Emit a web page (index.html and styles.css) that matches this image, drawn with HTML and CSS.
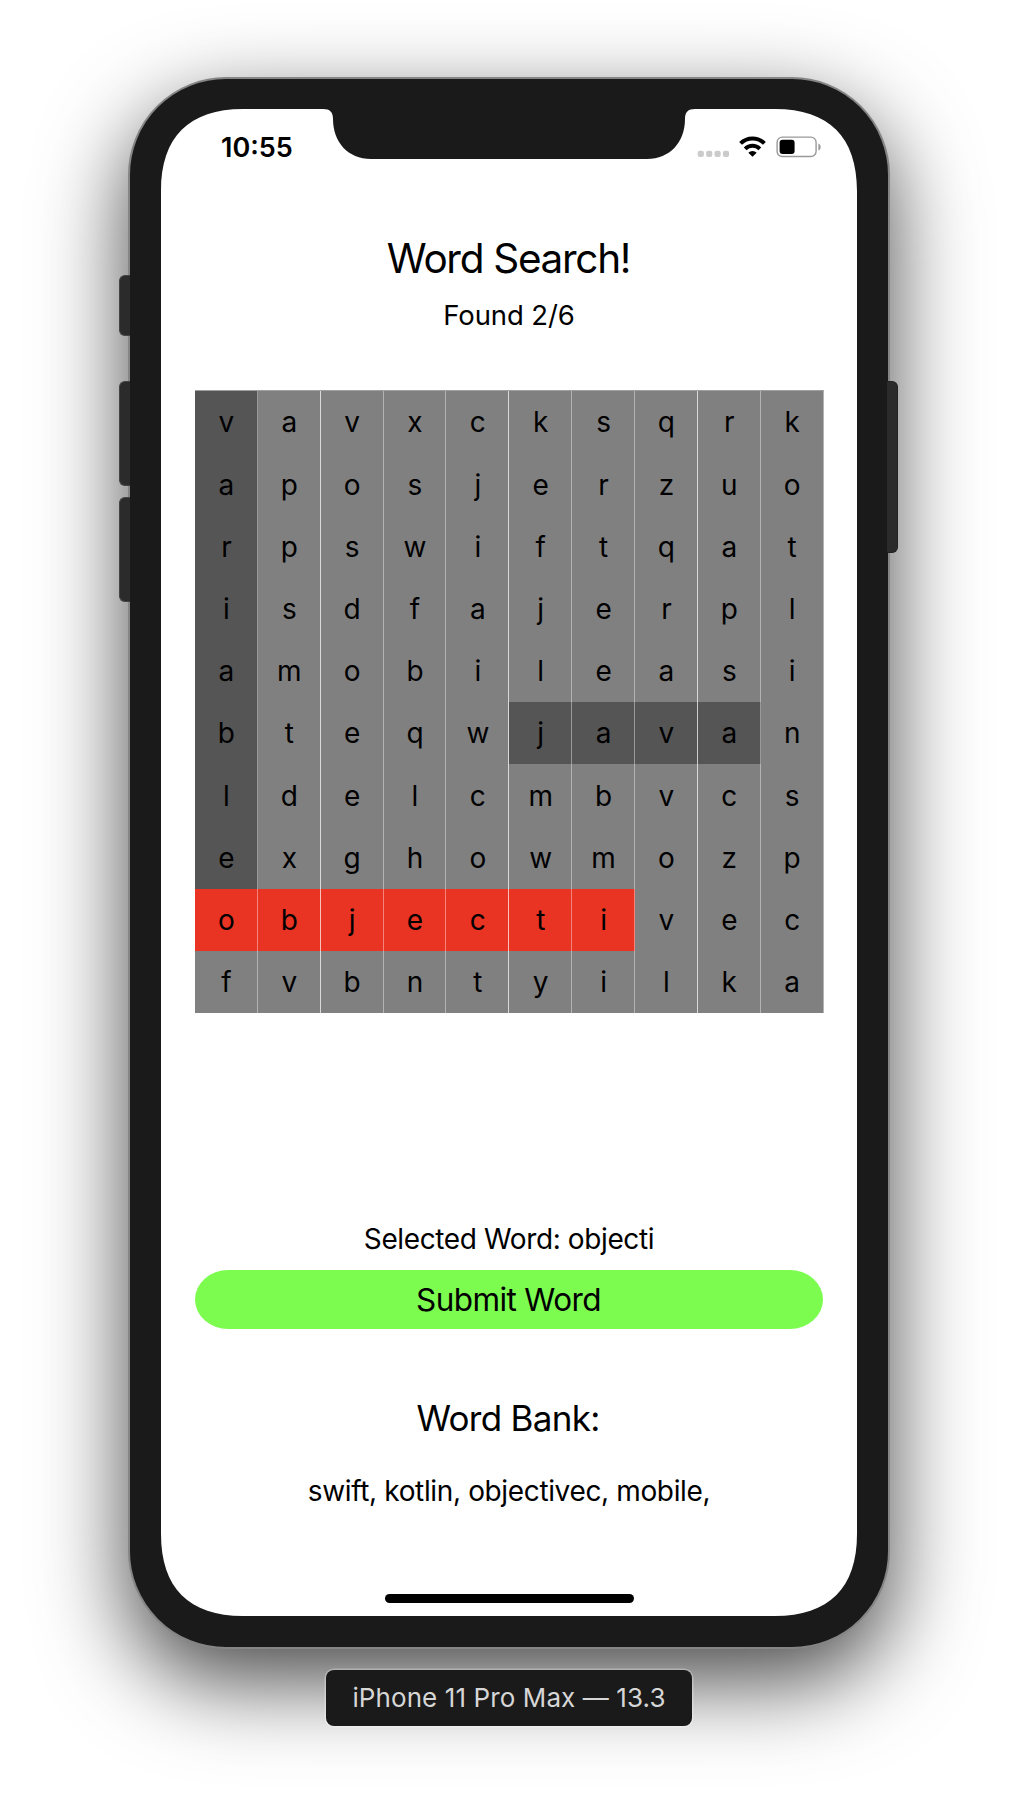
FILE: index.html
```
<!DOCTYPE html>
<html lang="en">
<head>
<meta charset="utf-8">
<title>Word Search</title>
<link rel="stylesheet" href="styles.css">
</head>
<body>
<main class="stage">
  <div class="device">
    <span class="side-button mute"></span>
    <span class="side-button volume-up"></span>
    <span class="side-button volume-down"></span>
    <span class="side-button power"></span>
    <section class="screen">
      <svg class="screen-shape" viewBox="0 0 696 1507" aria-hidden="true">
        <path fill="#fff" d="M0 82C0 28 28 0 82 0H162C169 0 172 3 172 10C172 33 187 50 210 50H486C509 50 524 33 524 10C524 3 527 0 534 0H614C668 0 696 28 696 82V1425C696 1479 668 1507 614 1507H82C28 1507 0 1479 0 1425Z"/>
      </svg>
      <header class="status-bar">
        <span class="time">10:55</span>
        <svg class="status-icons" width="126" height="22" viewBox="0 0 126 22" aria-hidden="true">
          <g fill="#cbcbcb">
            <rect x="0.7" y="14.8" width="6.2" height="6.2" rx="2"/>
            <rect x="9.1" y="14.8" width="6.2" height="6.2" rx="2"/>
            <rect x="17.5" y="14.8" width="6.2" height="6.2" rx="2"/>
            <rect x="25.9" y="14.8" width="6.2" height="6.2" rx="2"/>
          </g>
          <g fill="none" stroke="#000" stroke-width="4">
            <path d="M43.6 7.4A16.8 16.8 0 0 1 67.4 7.4"/>
            <path d="M48.2 12.8A10.4 10.4 0 0 1 62.8 12.8"/>
          </g>
          <path d="M55.5 20.8L51.3 16.7A6 6 0 0 1 59.7 16.7Z"/>
          <rect x="80.1" y="1.1" width="39" height="19.4" rx="5.2" fill="none" stroke="#999" stroke-width="1.4"/>
          <rect x="82.6" y="3.7" width="15" height="14.2" rx="3"/>
          <path fill="#999" d="M121.4 7.4C124.4 8.4 124.4 13.4 121.4 14.4Z"/>
        </svg>
      </header>
      <h1 class="title">Word Search!</h1>
      <p class="found">Found 2/6</p>
      <div class="grid" id="grid"></div>
      <p class="selected">Selected Word: objecti</p>
      <button class="submit" type="button">Submit Word</button>
      <h2 class="bank-title">Word Bank:</h2>
      <p class="bank">swift, kotlin, objectivec, mobile,</p>
      <div class="home-indicator"></div>
    </section>
  </div>
  <div class="device-label">iPhone 11 Pro Max — 13.3</div>
</main>
<script src="grid.js"></script>
</body>
</html>
```
FILE: styles.css
```
* { box-sizing: border-box; }
body {
  margin: 0;
  background: #fff;
  color: #000;
  font-family: Inter, "Liberation Sans", sans-serif;
}
h1, h2, p { margin: 0; font-weight: 400; text-align: center; white-space: nowrap; }
.stage {
  display: flex;
  flex-direction: column;
  align-items: center;
  height: 1798px;
  padding-top: 77px;
  overflow: hidden;
}
.device {
  position: relative;
  z-index: 0;
  flex: none;
  width: 762px;
  height: 1572px;
  padding: 30px 31px 31px;
  border: 2px solid #858585;
  border-radius: 98px;
  background: #1a1a1a;
  box-shadow: 0 32px 88px rgba(0, 0, 0, .72);
}
.side-button {
  position: absolute;
  left: -11px;
  width: 11px;
  border: 1px solid #444;
  border-right: 0;
  border-radius: 6px 0 0 6px;
  background: #2b2b2b;
}
.mute { top: 196px; height: 61px; }
.volume-up { top: 302px; height: 105px; }
.volume-down { top: 418px; height: 105px; }
.power {
  top: 302px;
  right: -10px;
  left: auto;
  height: 172px;
  border: 1px solid #222;
  border-left: 0;
  border-radius: 0 6px 6px 0;
}
.screen {
  position: relative;
  display: flex;
  flex-direction: column;
  height: 1507px;
  padding: 0 34px;
}
.screen-shape {
  position: absolute;
  inset: 0;
  z-index: -1;
  width: 696px;
  height: 1507px;
}
.status-bar {
  display: flex;
  justify-content: space-between;
  height: 75px;
  padding: 27px 0 0 26px;
}
.time { height: 22px; font-size: 27px; line-height: 23px; font-weight: 600; }
.title { height: 48px; margin-top: 51px; padding-right: 1px; font-size: 40.5px; line-height: 48px; letter-spacing: -1.3px; }
.found { height: 34px; margin-top: 15px; font-size: 27.5px; line-height: 34px; letter-spacing: -.1px; }
.grid {
  display: grid;
  grid-template-columns: repeat(10, 1fr);
  grid-template-rows: repeat(10, 1fr);
  height: 623px;
  margin: 58px -.6px 0 0;
  border-top: 1px solid #a0a0a0;
}
.cell {
  display: flex;
  align-items: center;
  justify-content: center;
  padding: .6px 0 0 1px;
  border-right: 1px solid rgba(255, 255, 255, .4);
  background: #808080;
  font-size: 28px;
}
.cell:nth-child(10n + 2), .cell:nth-child(10n + 5), .cell:nth-child(10n + 8) { border-right-color: rgba(255, 255, 255, .7); }
.cell.done { background: #555; }
.cell.picked { background: #e93323; }
.selected { height: 34px; margin-top: 209px; font-size: 28px; line-height: 34px; letter-spacing: -.38px; }
.submit {
  height: 59px;
  margin-top: 14px;
  padding: 0 1px 0 0;
  border: 0;
  border-radius: 33px / 29.5px;
  background: #7dfc50;
  color: #000;
  font: 400 31.5px/58px Inter, "Liberation Sans", sans-serif;
  letter-spacing: -.6px;
  white-space: nowrap;
}
.bank-title { height: 42px; margin-top: 68px; padding-right: 2px; font-size: 35px; line-height: 42px; letter-spacing: -.7px; }
.bank { height: 34px; margin-top: 35px; font-size: 28px; line-height: 34px; letter-spacing: -.36px; }
.home-indicator {
  align-self: center;
  width: 249px;
  height: 8.5px;
  margin-top: 86px;
  border-radius: 5px;
  background: #000;
}
.device-label {
  position: relative;
  flex: none;
  width: 366px;
  height: 56px;
  margin-top: 21px;
  border-radius: 8px;
  background: #1a1a1a;
  box-shadow: 0 0 0 1.5px rgba(255, 255, 255, .3);
  color: #d6d6d6;
  font-size: 26px;
  line-height: 55px;
  letter-spacing: .1px;
  text-align: center;
  white-space: nowrap;
}
```
FILE: grid.js
```
const rows = ["vavxcksqrk", "aposjerzuo", "rpswiftqat", "isdfajerpl", "amobileasi",
  "bteqwjavan", "ldelcmbvcs", "exghowmozp", "objectivec", "fvbntyilka"];
const grid = document.getElementById("grid");
rows.forEach((row, y) => [...row].forEach((letter, x) => {
  const cell = document.createElement("span");
  cell.className = "cell";
  if ((x === 0 && y < 8) || (y === 5 && x > 4 && x < 9)) cell.classList.add("done");
  if (y === 8 && x < 7) cell.classList.add("picked");
  cell.textContent = letter;
  grid.append(cell);
}));
```
